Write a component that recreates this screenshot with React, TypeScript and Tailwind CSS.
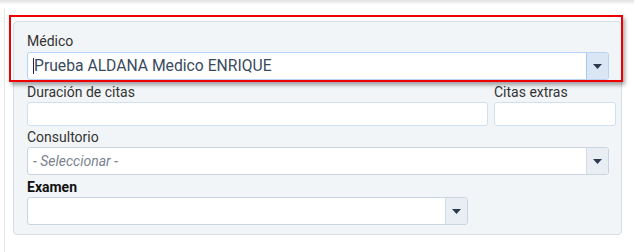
import { ReactNode } from "react";

//Small caret for the select buttons
const Caret = () => (
    <svg width="9" height="5" viewBox="0 0 9 5" className="block">
        <path d="M0 0 H9 L4.5 5 Z" fill="#2b3a4e" />
    </svg>
);

interface SelectProps {
    children?: ReactNode;
    focused?: boolean;
    className?: string;
}

const SelectBox = ({ children, focused = false, className = "" }: SelectProps) => (
    <div
        className={`flex h-[28px] rounded-[3px] border bg-white ${focused ? "border-[#b6d3f3]" : "border-[#c9d4e0]"} ${className}`}
    >
        <div className="flex flex-1 items-center px-[5px] overflow-hidden whitespace-nowrap">{children}</div>
        <div
            className={`flex w-[22px] items-center justify-center rounded-r-[2px] border-l ${focused ? "border-[#a9c9ef] bg-[#dbe6f4]" : "border-[#d3dbe4] bg-[#e9eef4]"}`}
        >
            <Caret />
        </div>
    </div>
);

const Label = ({ children, bold = false, className = "" }: { children: ReactNode; bold?: boolean; className?: string }) => (
    <div className={`h-[20px] leading-[20px] text-[14px] ${bold ? "font-bold text-[#111]" : "text-[#333]"} ${className}`}>{children}</div>
);

export default function App() {
    return (
        <div className="relative w-[639px] h-[252px] bg-white overflow-hidden" style={{ fontFamily: "Roboto, 'Liberation Sans', sans-serif" }}>
            {/* top shadow */}
            <div className="h-[5px] w-[634px] bg-gradient-to-b from-[#e2e2e2] to-white" />

            <div className="ml-[4px] mt-[4px] h-[243px] border-l border-[#e6e6e6] pl-[8px] pt-[12px]">
                {/* panel */}
                <div className="w-[609px] h-[214px] rounded-[4px] border border-[#d7dde2] bg-[#f2f5f7] pl-[13px] pr-[5px] pt-[9px]">
                    <Label>Médico</Label>
                    <SelectBox focused className="mt-px w-[582px]">
                        <span className="inline-block h-[16px] w-px bg-[#1b2a66]" />
                        <span className="text-[15.7px] text-[#3a4a5e]">Prueba ALDANA Medico ENRIQUE</span>
                    </SelectBox>

                    <div className="mt-[2px] flex gap-[6px]">
                        <div className="w-[461px]">
                            <Label>Duración de citas</Label>
                            <div className="h-[24px] rounded-[3px] border border-[#cfe0f1] bg-white" />
                        </div>
                        <div className="w-[122px]">
                            <Label>Citas extras</Label>
                            <div className="h-[24px] rounded-[3px] border border-[#cfe0f1] bg-white" />
                        </div>
                    </div>

                    <Label className="mt-px">Consultorio</Label>
                    <SelectBox className="w-[582px]">
                        <span className="text-[14px] italic text-[#7a8290]">- Seleccionar -</span>
                    </SelectBox>

                    <Label bold className="mt-[2px]">Examen</Label>
                    <SelectBox className="w-[441px]" />
                </div>
            </div>

            {/* red highlight */}
            <div className="absolute left-[9px] top-[15px] w-[614px] h-[67px] border-2 border-[#ee0000] shadow-[2px_3px_4px_rgba(0,0,0,0.35)]" />
        </div>
    );
}
